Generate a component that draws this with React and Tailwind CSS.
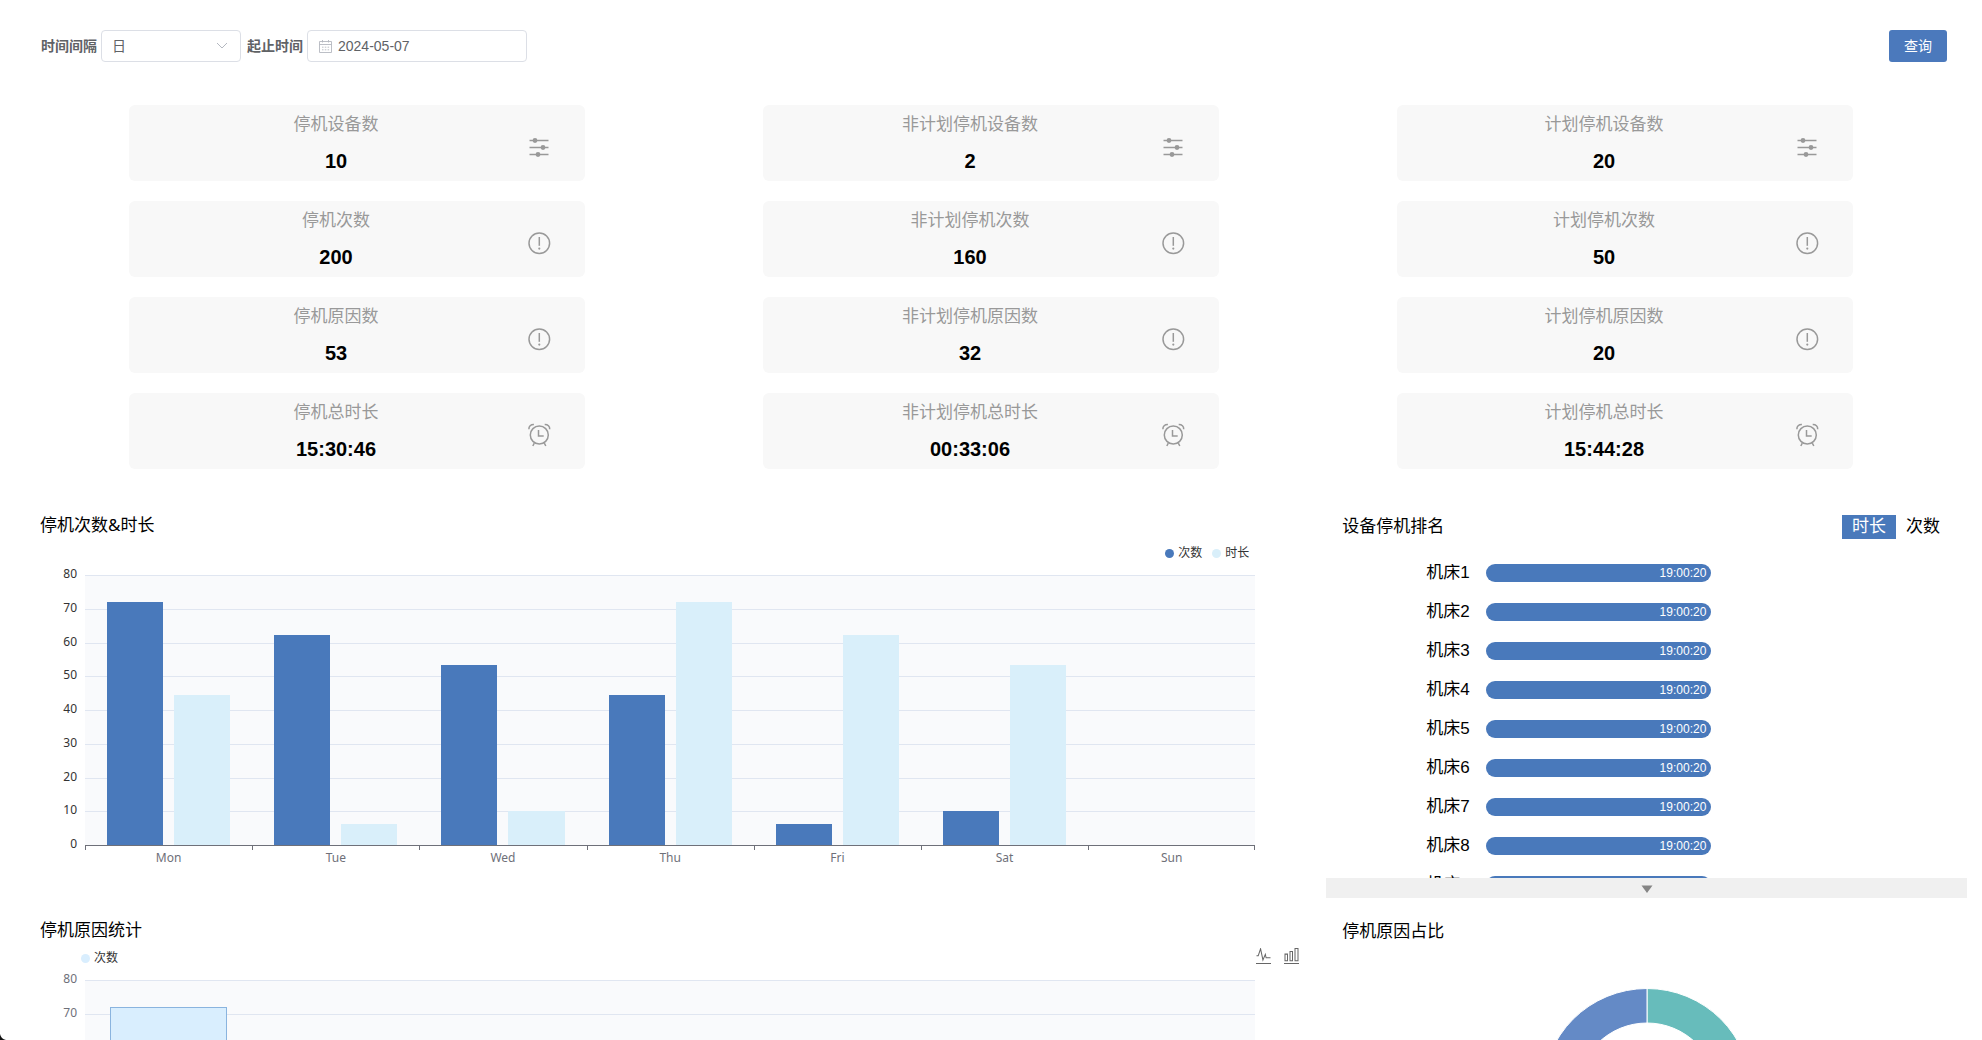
import { useState } from 'react'

const stats = [
  { label: '停机设备数', value: '10', icon: 'tune' },
  { label: '非计划停机设备数', value: '2', icon: 'tune' },
  { label: '计划停机设备数', value: '20', icon: 'tune' },
  { label: '停机次数', value: '200', icon: 'alert' },
  { label: '非计划停机次数', value: '160', icon: 'alert' },
  { label: '计划停机次数', value: '50', icon: 'alert' },
  { label: '停机原因数', value: '53', icon: 'alert' },
  { label: '非计划停机原因数', value: '32', icon: 'alert' },
  { label: '计划停机原因数', value: '20', icon: 'alert' },
  { label: '停机总时长', value: '15:30:46', icon: 'clock' },
  { label: '非计划停机总时长', value: '00:33:06', icon: 'clock' },
  { label: '计划停机总时长', value: '15:44:28', icon: 'clock' },
]

const days = ['Mon', 'Tue', 'Wed', 'Thu', 'Fri', 'Sat', 'Sun']
const yTicks = [80, 70, 60, 50, 40, 30, 20, 10, 0]

const downtime = [
  { name: '次数', color: 'bg-[#4979bb]', data: [72, 62.3, 53.3, 44.5, 6.3, 10.2, 0] },
  { name: '时长', color: 'bg-[#d9effa]', data: [44.5, 6.3, 10.2, 72, 62.3, 53.3, 0] },
]

const reasons = [
  { name: '次数', color: 'border border-b-0 border-[#8ab4df] bg-[#d9eefe]', data: [72, 62, 53, 44, 6, 10, 0] },
]

const machines = [1, 2, 3, 4, 5, 6, 7, 8, 9].map((n) => ({ name: `机床${n}`, time: '19:00:20' }))

function StatIcon({ type }) {
  return (
    <svg className="w-6 h-6 shrink-0 text-[#999]" viewBox="0 0 24 24" fill="none" stroke="currentColor" strokeWidth="1.5">
      {type === 'tune' && (
        <>
          <path d="M2.5 5.5h19M2.5 12.5h19M2.5 19.5h19" />
          <g fill="currentColor" stroke="none">
            <circle cx="8" cy="5.5" r="2.4" />
            <circle cx="16" cy="12.5" r="2.4" />
            <circle cx="11" cy="19.5" r="2.4" />
          </g>
        </>
      )}
      {type === 'alert' && (
        <>
          <circle cx="12.3" cy="12.3" r="10.3" />
          <path d="M12.3 6v8.8" />
          <circle cx="12.3" cy="17.6" r="1.1" fill="currentColor" stroke="none" />
        </>
      )}
      {type === 'clock' && (
        <>
          <circle cx="12.3" cy="12" r="9" />
          <path d="M11.5 7v6h5.2" />
          <path d="M1.9 6.2C1.7 3.4 3.7 1.4 6.9 1.5M17.7 1.5c3.2-.1 5.2 1.9 5 4.7" />
          <path d="M7.3 20.2l-1.5 2.8M17.3 20.2l1.5 2.8" />
        </>
      )}
    </svg>
  )
}

function StatCard({ label, value, icon }) {
  return (
    <div className="w-[72%] flex items-center justify-self-center rounded-md bg-[#f8f8f8] pl-4 pr-[34px]">
      <div className="flex-1 pb-1 text-center">
        <p className="text-[17px] leading-10 text-[#999]">{label}</p>
        <p className="text-xl leading-8 font-bold text-black">{value}</p>
      </div>
      <div className="pt-2">
        <StatIcon type={icon} />
      </div>
    </div>
  )
}

function Legend({ series }) {
  return (
    <ul className="flex gap-2.5 text-xs leading-4 text-[#333]">
      {series.map((s) => (
        <li key={s.name} className="flex items-center gap-1">
          <span className={`w-[9px] h-[9px] rounded-full ${s.dot}`} />
          {s.name}
        </li>
      ))}
    </ul>
  )
}

function BarChart({ series, axisColor, groupClass }) {
  return (
    <div className="flex pr-[44px] text-xs leading-4">
      <div className={`w-[45px] h-[286px] -mt-[9px] pr-2 flex flex-col justify-between text-right ${axisColor}`}>
        {yTicks.map((t) => (
          <span key={t}>{t}</span>
        ))}
      </div>
      <div className="flex-1">
        <div className="relative h-[270px] bg-[#f9fafc]">
          {/* Grid lines */}
          <div className="absolute inset-0 flex flex-col">
            {yTicks.slice(1).map((t) => (
              <div key={t} className="flex-1 border-t border-[#e0e6f1]" />
            ))}
          </div>
          <div className="relative h-full flex">
            {days.map((day, i) => (
              <div key={day} className={`flex-1 flex items-end ${groupClass}`}>
                {series.map((s) => (
                  <div
                    key={s.name}
                    className={`flex-1 ${s.data[i] ? s.color : ''}`}
                    style={{ height: `${(s.data[i] / 80) * 100}%` }}
                  />
                ))}
              </div>
            ))}
          </div>
        </div>
        <div className="flex border-t border-[#6e7079] text-center text-[#6e7079]">
          {days.map((day) => (
            <div key={day} className="group flex-1">
              <div className="h-1 border-l border-[#6e7079] group-last:border-r" />
              {day}
            </div>
          ))}
        </div>
      </div>
    </div>
  )
}

function Toolbox() {
  return (
    <div className="flex gap-[13px] self-start text-[#666]">
      <button type="button" aria-label="折线图">
        <svg className="w-[15px] h-4" viewBox="0 0 60 60" preserveAspectRatio="none" fill="none" stroke="currentColor" strokeWidth="4">
          <path d="M2 28.9h7l9.3-26l9.4 42l9.7-21l3 12.8H58M0 58h60" />
        </svg>
      </button>
      <button type="button" aria-label="柱状图">
        <svg className="w-[15px] h-4" viewBox="0 0 60 60" preserveAspectRatio="none" fill="none" stroke="currentColor" strokeWidth="4">
          <path d="M4 23h10v25H4zM24 13h10v35H24zM44 2h12v46H44zM0 58h60" />
        </svg>
      </button>
    </div>
  )
}

function FilterBar() {
  return (
    <form className="flex items-center pl-[26px] pr-5 text-sm text-[#606266]" onSubmit={(e) => e.preventDefault()}>
      <label htmlFor="interval" className="mr-1 font-bold">时间间隔</label>
      <div className="relative mr-1.5">
        <select id="interval" defaultValue="日" className="w-[140px] h-8 appearance-none rounded border border-[#dcdfe6] bg-white pl-2.5 outline-none">
          <option>日</option>
          <option>周</option>
          <option>月</option>
        </select>
        <svg className="pointer-events-none absolute right-[13px] top-[11px] w-3 h-2.5 text-[#b4b8c0]" viewBox="0 0 12 10" fill="none" stroke="currentColor">
          <path d="M1 2l5 5 5-5" />
        </svg>
      </div>
      <label htmlFor="range" className="mr-1 font-bold">起止时间</label>
      <div className="relative">
        <svg className="absolute left-3 top-2.5 w-[13px] h-[13px] text-[#b4b8c0]" viewBox="0 0 13 13" fill="none" stroke="currentColor" strokeWidth="0.9">
          <path d="M.5 1.5h12v11H.5zM.5 4.5h12M3.5 0v2.5M9.5 0v2.5" />
          <path d="M3 7.2h1.5M5.8 7.2h1.5M8.6 7.2h1.5M3 9.8h1.5M5.8 9.8h1.5M8.6 9.8h1.5" />
        </svg>
        <input id="range" type="text" defaultValue="2024-05-07" className="w-[220px] h-8 rounded border border-[#dcdfe6] bg-white pl-[30px] outline-none" />
      </div>
      <button type="submit" className="ml-auto w-[58px] h-8 rounded-[3px] bg-[#4b79bc] text-white">查询</button>
    </form>
  )
}

function Ranking() {
  const [tab, setTab] = useState('时长')
  return (
    <section className="flex flex-col pl-2.5 pt-0.5">
      <div className="flex items-center pl-4 pr-[17px] text-[17px] leading-6">
        <h2 className="mr-auto">设备停机排名</h2>
        {['时长', '次数'].map((t) => (
          <button
            key={t}
            type="button"
            onClick={() => setTab(t)}
            className={`px-2.5 ${tab === t ? 'bg-[#4979bb] text-white' : 'text-black'}`}
          >
            {t}
          </button>
        ))}
      </div>
      <ul className="mt-[25px] h-[314px] overflow-hidden flex flex-col gap-[21px] pl-[100px]">
        {machines.map((m) => (
          <li key={m.name} className="flex shrink-0 items-center leading-[18px]">
            <span className="w-[60px] shrink-0 text-[17px] leading-[18px] whitespace-nowrap">{m.name}</span>
            <span className="w-[225px] h-[18px] rounded-full bg-[#4979bb] pr-[5px] text-right text-xs leading-[18px] text-white">
              {m.time}
            </span>
          </li>
        ))}
      </ul>
      <button type="button" aria-label="展开" className="h-5 shrink-0 flex items-center justify-center bg-[#f0f0f0]">
        <svg className="w-3 h-2 mt-0.5 text-[#858585]" viewBox="0 0 12 8" fill="currentColor">
          <path d="M.5.5h11L6 8z" />
        </svg>
      </button>
    </section>
  )
}

function ReasonShare() {
  return (
    <section className="pl-2.5 pt-0.5">
      <h2 className="px-4 text-[17px] leading-6">停机原因占比</h2>
      <svg className="mx-auto mt-11 w-[210px] h-[210px]" viewBox="-105 -105 210 210" stroke="#fff" strokeWidth="1">
        <path d="M0-104.500A104.500 104.500 0 0 1 0 104.500V70A70 70 0 0 0 0-70z" fill="#67bcbb" />
        <path d="M0-104.500A104.500 104.500 0 0 0 0 104.500V70A70 70 0 0 1 0-70z" fill="#648ac6" />
      </svg>
    </section>
  )
}

export default function App() {
  return (
    <div className="relative h-screen overflow-hidden bg-white px-[15px] pt-[30px] text-black font-['Liberation_Sans','Noto_Sans_CJK_SC',sans-serif]">
      <FilterBar />

      <div className="mt-[43px] mx-[25px] grid grid-cols-3 gap-y-5">
        {stats.map((s) => (
          <StatCard key={s.label} {...s} />
        ))}
      </div>

      <div className="mt-11 grid grid-cols-[2fr_1fr] auto-rows-[405px]">
        <section className="pl-[25px] pr-[17px] font-['Noto_Sans','Noto_Sans_CJK_SC',sans-serif]">
          <h2 className="text-[17px] leading-6">停机次数&时长</h2>
          <div className="mt-1.5 mb-[14px] flex h-[18px] items-end justify-end pr-[50px]">
            <Legend series={[{ name: '次数', dot: 'bg-[#4979bb]' }, { name: '时长', dot: 'bg-[#d9effa]' }]} />
          </div>
          <BarChart series={downtime} axisColor="text-[#333]" groupClass="px-[22px] gap-[11px]" />
        </section>

        <Ranking />

        <section className="pl-[25px] pr-[17px] font-['Noto_Sans','Noto_Sans_CJK_SC',sans-serif]">
          <h2 className="text-[17px] leading-6">停机原因统计</h2>
          <div className="mt-1.5 mb-[14px] flex h-[18px] items-end justify-between pl-[41px]">
            <Legend series={[{ name: '次数', dot: 'bg-[#d9eefe]' }]} />
            <Toolbox />
          </div>
          <BarChart series={reasons} axisColor="text-[#6e7079]" groupClass="px-[25px]" />
        </section>

        <ReasonShare />
      </div>

      {/* Dark window corner */}
      <svg className="absolute bottom-0 left-0 w-1.5 h-1.5" viewBox="0 0 6 6" fill="#111">
        <path d="M0 0Q1 5 6 6H0z" />
      </svg>
    </div>
  )
}
